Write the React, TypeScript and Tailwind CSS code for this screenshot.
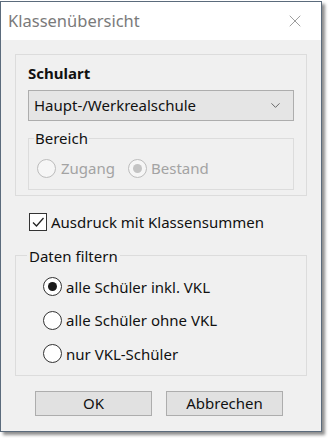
import { ChevronDown, X } from "lucide-react";

const font = { fontFamily: '"Noto Sans", "Liberation Sans", sans-serif' };

const Radio = ({ checked, disabled }: { checked?: boolean; disabled?: boolean }) => (
  <span
    className={`flex h-[19px] w-[19px] shrink-0 items-center justify-center rounded-full border ${
      disabled ? "border-[#bcbcbc] bg-[#f6f6f6]" : "border-[#333333] bg-white"
    }`}
  >
    {checked && (
      <span className={`h-[9px] w-[9px] rounded-full ${disabled ? "bg-[#c4c4c4]" : "bg-[#1a1a1a]"}`} />
    )}
  </span>
);

export default function App() {
  return (
    <div className="min-h-screen bg-white pt-[1px]" style={font}>
      <div className="flex h-[431px] w-[322px] flex-col border border-[#5b6b7c] shadow-[3px_3px_3px_rgba(0,0,0,0.45)]">
        {/* title bar */}
        <div className="flex h-[38px] items-center justify-between bg-white pl-[7px] pr-[16px]">
          <span className="text-[16.5px] text-[#7a7a7a]">Klassenübersicht</span>
          <X size={20} strokeWidth={1} className="text-[#8a8a8a]" />
        </div>

        <div className="flex flex-1 flex-col bg-[#f0f0f0] px-[14px] pt-[14px] text-[15px] text-[#111]">
          {/* Schulart panel */}
          <div className="flex h-[142px] flex-col border border-[#dcdcdc] px-[12px] pt-[8px]">
            <div className="text-[15px] font-bold leading-[20px]">Schulart</div>
            <div className="mt-[7px] flex h-[31px] items-center justify-between border border-[#adadad] bg-[#e5e5e5] pl-[5px] pr-[10px]">
              <span>Haupt-/Werkrealschule</span>
              <ChevronDown size={15} strokeWidth={1.25} className="text-[#444]" />
            </div>
            <fieldset className="mt-[8px] h-[61px] border border-[#dcdcdc]">
              <legend className="ml-[5px] px-[1px] leading-[18px]">Bereich</legend>
              <div className="mt-[10px] flex items-center pl-[8px] text-[#a3a3a3]">
                <Radio disabled />
                <span className="ml-[5px]">Zugang</span>
                <span className="ml-[13px]" />
                <Radio checked disabled />
                <span className="ml-[4px]">Bestand</span>
              </div>
            </fieldset>
          </div>

          {/* checkbox */}
          <label className="ml-[14px] mt-[15px] flex items-center gap-[4px]">
            <span className="flex h-[18px] w-[18px] items-center justify-center border border-[#333] bg-white">
              <svg width="14" height="14" viewBox="0 0 14 14" fill="none">
                <path d="M2 7.5 L5.5 11 L12.5 3" stroke="#222" strokeWidth="1.3" />
              </svg>
            </span>
            <span>Ausdruck mit Klassensummen</span>
          </label>

          {/* Daten filtern */}
          <fieldset className="mt-[12px] h-[130px] border border-[#dcdcdc]">
            <legend className="ml-[11px] px-[2px] leading-[20px]">Daten filtern</legend>
            <div className="mt-[10px] flex flex-col gap-[11px] pl-[27px]">
              <div className="flex items-center gap-[4px]">
                <Radio checked />
                <span>alle Schüler inkl. VKL</span>
              </div>
              <div className="flex items-center gap-[4px]">
                <Radio />
                <span>alle Schüler ohne VKL</span>
              </div>
              <div className="flex items-center gap-[4px]">
                <Radio />
                <span>nur VKL-Schüler</span>
              </div>
            </div>
          </fieldset>

          {/* buttons */}
          <div className="ml-[20px] mt-[15px] flex gap-[14px]">
            <button className="h-[25px] w-[117px] border border-[#adadad] bg-[#e1e1e1]">OK</button>
            <button className="h-[25px] w-[117px] border border-[#adadad] bg-[#e1e1e1]">Abbrechen</button>
          </div>
        </div>
      </div>
    </div>
  );
}
